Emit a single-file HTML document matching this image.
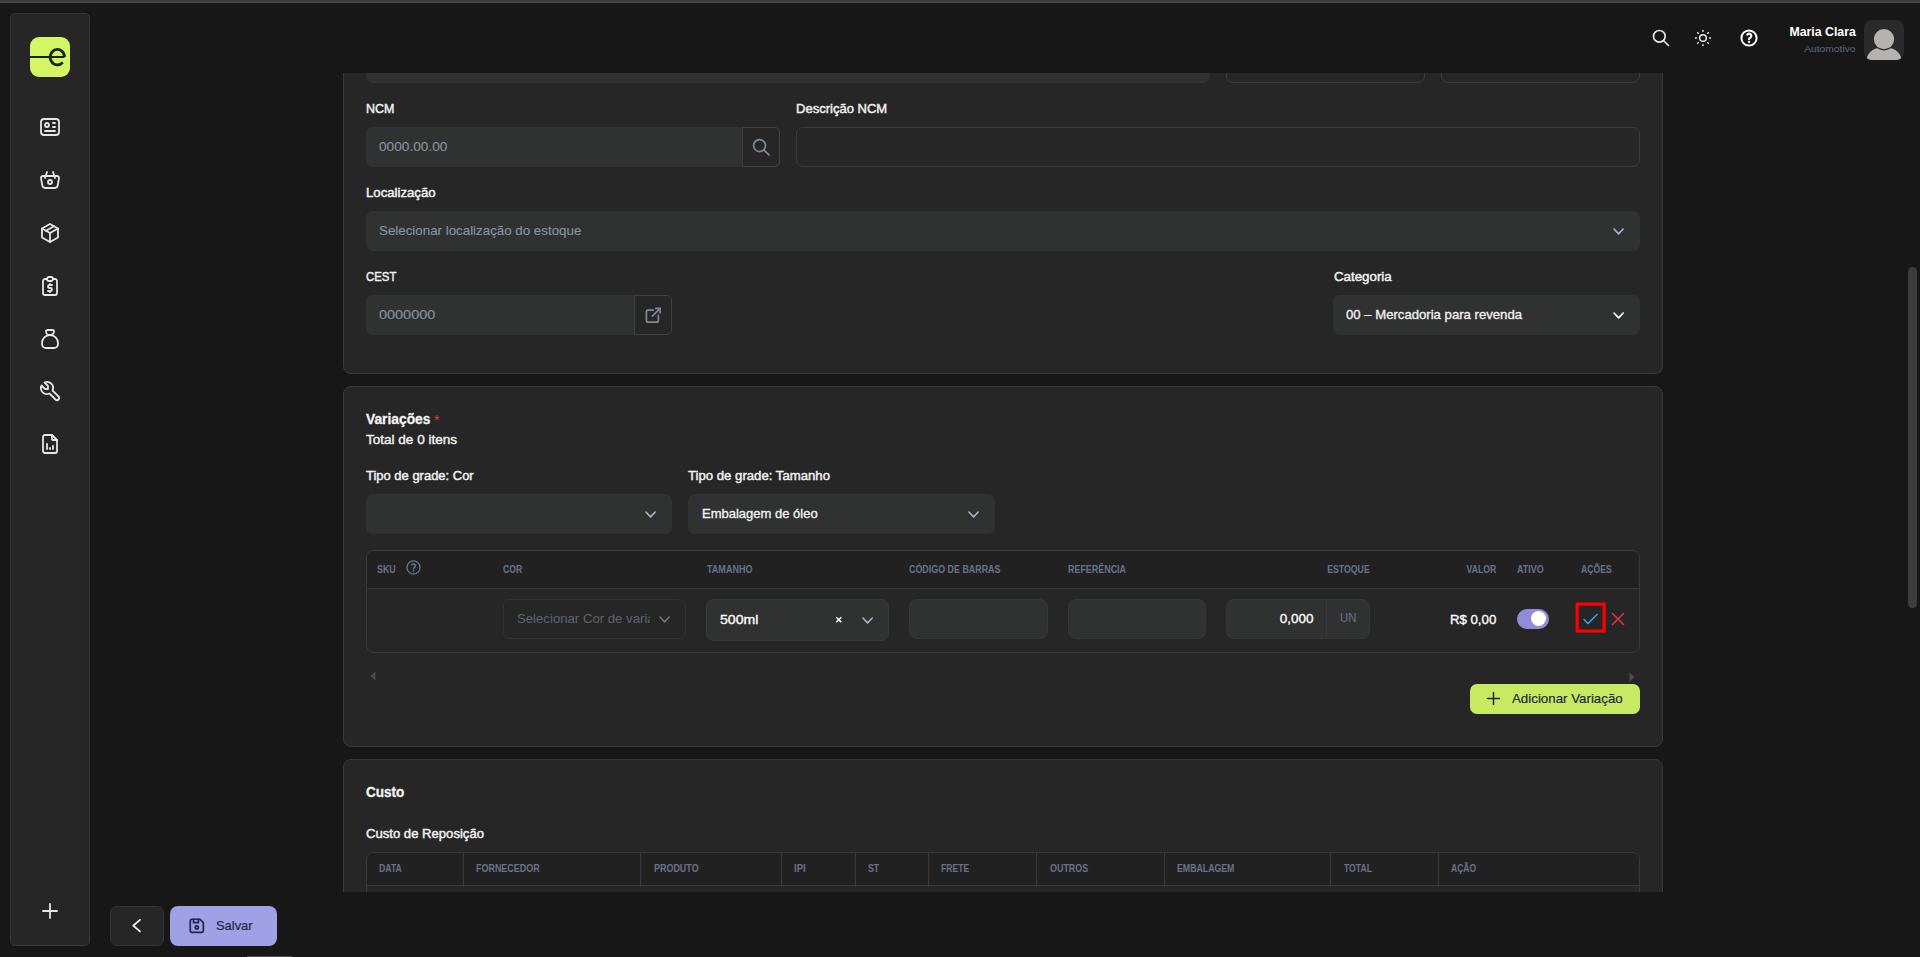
<!DOCTYPE html>
<html><head><meta charset="utf-8"><title>Produto</title>
<style>
*{box-sizing:border-box;margin:0;padding:0}
html,body{width:1920px;height:957px;overflow:hidden;background:#171717;font-family:"Liberation Sans",sans-serif;color:#f0f0f0}
.a{position:absolute}
.t{white-space:nowrap}
.topbar{left:0;top:0;width:1920px;height:3px;background:#3d3d3d;border-bottom:1px solid #494a49}
.side{left:10px;top:13px;width:80px;height:933px;background:#262626;border:1px solid #363636;border-radius:5px}
.logo{left:30px;top:37px;width:40px;height:40px;background:#d3f764;border-radius:9px}
.card{left:343px;width:1320px;background:#262626;border:1px solid #393939;border-radius:8px}
.inp{background:#303232;border-radius:7px}
.inpo{background:transparent;border:1px solid #3b3b3b;border-radius:7px}
svg{position:absolute;overflow:visible;fill:none;stroke-linecap:round;stroke-linejoin:round}
.si{left:38px;width:24px;height:24px;stroke:#e6e6e6;stroke-width:1.8}
.chev{width:12px;height:7px;stroke-width:1.5}
</style></head><body>
<div class="a topbar"></div>
<div class="a side"></div>
<div class="a logo"></div>
<svg class="a" style="left:30px;top:37px;width:40px;height:40px" viewBox="0 0 40 40"><path d="M0 20.100H34.500" stroke="#1b2317" stroke-width="2" stroke-linecap="butt"/><path d="M34.500 20.100A7.150 7.750 0 1 0 32.700 25.300" stroke="#1b2317" stroke-width="2.800" stroke-linecap="butt"/></svg>
<svg class="si" style="top:115px" viewBox="0 0 24 24"><path d="M3 7a3 3 0 0 1 3 -3h12a3 3 0 0 1 3 3v10a3 3 0 0 1 -3 3h-12a3 3 0 0 1 -3 -3z"/><path d="M7 10a2 2 0 1 0 4 0a2 2 0 1 0 -4 0"/><path d="M15 8h2"/><path d="M15 12h2"/><path d="M7 16h10"/></svg>
<svg class="si" style="top:168px" viewBox="0 0 24 24"><path d="M10 14a2 2 0 1 0 4 0a2 2 0 0 0 -4 0"/><path d="M5.001 8h13.999a2 2 0 0 1 1.977 2.304l-1.255 7.152a3 3 0 0 1 -2.966 2.544h-9.512a3 3 0 0 1 -2.965 -2.544l-1.255 -7.152a2 2 0 0 1 1.977 -2.304z"/><path d="M17 10l-2 -6"/><path d="M7 10l2 -6"/></svg>
<svg class="si" style="top:221px" viewBox="0 0 24 24"><path d="M12 3l8 4.500v9l-8 4.500l-8 -4.500v-9l8 -4.500"/><path d="M12 12l8 -4.500"/><path d="M12 12v9"/><path d="M12 12l-8 -4.500"/><path d="M16 5.250l-8 4.500"/></svg>
<svg class="si" style="top:274px" viewBox="0 0 24 24"><path d="M9 5h-2a2 2 0 0 0 -2 2v12a2 2 0 0 0 2 2h10a2 2 0 0 0 2 -2v-12a2 2 0 0 0 -2 -2h-2"/><path d="M9 5a2 2 0 0 1 2 -2h2a2 2 0 0 1 2 2a2 2 0 0 1 -2 2h-2a2 2 0 0 1 -2 -2z"/><path d="M14 11h-2.500a1.500 1.500 0 0 0 0 3h1a1.500 1.500 0 0 1 0 3h-2.500"/><path d="M12 17v1m0 -8v1"/></svg>
<svg class="si" style="top:327px" viewBox="0 0 24 24"><path d="M9.500 3h5a1.500 1.500 0 0 1 1.500 1.500a3.500 3.500 0 0 1 -3.500 3.500h-1a3.500 3.500 0 0 1 -3.500 -3.500a1.500 1.500 0 0 1 1.500 -1.500z"/><path d="M4 17v-1a8 8 0 1 1 16 0v1a4 4 0 0 1 -4 4h-8a4 4 0 0 1 -4 -4z"/></svg>
<svg class="si" style="top:379px" viewBox="0 0 24 24"><path d="M7 10h3v-3l-3.500 -3.500a6 6 0 0 1 8 8l6 6a2 2 0 0 1 -3 3l-6 -6a6 6 0 0 1 -8 -8l3.500 3.500"/></svg>
<svg class="si" style="top:432px" viewBox="0 0 24 24"><path d="M14 3v4a1 1 0 0 0 1 1h4"/><path d="M17 21h-10a2 2 0 0 1 -2 -2v-14a2 2 0 0 1 2 -2h7l5 5v11a2 2 0 0 1 -2 2z"/><path d="M9 17v-5"/><path d="M12 17v-1"/><path d="M15 17v-3"/></svg>
<svg class="si" style="top:899px" viewBox="0 0 24 24"><path d="M12 5v14"/><path d="M5 12h14"/></svg>
<svg style="left:1651.200px;top:28.200px;width:20px;height:20px;stroke:#e8e8e8;stroke-width:2" viewBox="0 0 24 24"><path d="M3 10a7 7 0 1 0 14 0a7 7 0 1 0 -14 0"/><path d="M21 21l-6 -6"/></svg>
<svg style="left:1693px;top:27.700px;width:20px;height:20px;stroke:#e8e8e8;stroke-width:1.800" viewBox="0 0 24 24"><circle cx="12" cy="12" r="4"/><path d="M3 12h1m8 -9v1m8 8h1m-9 8v1m-6.400 -15.400l.7 .7m12.100 -.7l-.7 .7m0 11.400l.7 .7m-12.100 -.7l-.7 .7"/></svg>
<svg style="left:1737px;top:26px;width:24px;height:24px;stroke:#ffffff;stroke-width:2" viewBox="0 0 24 24"><circle cx="12" cy="12" r="7.600"/><path d="M12 15.900v.01" stroke-width="2.300"/><path d="M12 13.200a1.300 1.300 0 0 1 .9 -1.300a2.200 2.200 0 1 0 -2.600 -3.300" stroke-width="2.100"/></svg>
<div class="a" style="left:1864px;top:20px;width:40px;height:40px;background:#2a2a2a;border-radius:8px;overflow:hidden"><svg style="left:0;top:0;width:40px;height:40px" viewBox="0 0 40 40"><path d="M2.500 40C3.500 32 10 27.300 20 27.300S36.500 32 37.500 40Z" fill="#b5b3af" stroke="none"/><circle cx="20" cy="19.100" r="11.300" fill="#2a2a2a" stroke="none"/><circle cx="20" cy="19.100" r="10.200" fill="#b5b3af" stroke="none"/></svg></div>
<div class="a card" style="top:73px;height:301px;border-top:none;border-radius:0 0 8px 8px"></div>
<div class="a inp" style="left:366px;top:60px;width:844px;height:23px"></div>
<div class="a inpo" style="left:1226px;top:60px;width:199px;height:23px"></div>
<div class="a inpo" style="left:1441px;top:60px;width:199px;height:23px"></div>
<div class="a" style="left:343px;top:60px;width:1320px;height:13px;background:#171717"></div>
<div class="a inp" style="left:366px;top:127px;width:377px;height:40px;border-radius:7px 0 0 7px"></div>
<div class="a" style="left:742px;top:127px;width:38px;height:40px;border:1px solid #3f4041;border-radius:0 5px 5px 0;background:#262626"></div>
<svg style="left:750.900px;top:136.760px;width:20.500px;height:20.500px;stroke:#7d8b98;stroke-width:2" viewBox="0 0 24 24"><path d="M3 10a7 7 0 1 0 14 0a7 7 0 1 0 -14 0"/><path d="M21 21l-6 -6"/></svg>
<div class="a inpo" style="left:796px;top:127px;width:844px;height:40px"></div>
<div class="a inp" style="left:366px;top:211px;width:1274px;height:40px"></div>
<svg style="left:1614.30px;top:228.60px;width:9.2px;height:4.9px;stroke:#a6b2c4;stroke-width:1.6" viewBox="0 0 9.2 4.9"><path d="M0 0L4.6 4.9L9.2 0"/></svg>
<div class="a inp" style="left:366px;top:295px;width:269px;height:40px;border-radius:7px 0 0 7px"></div>
<div class="a" style="left:634px;top:295px;width:38px;height:40px;border:1px solid #3f4041;border-radius:0 5px 5px 0;background:#262626"></div>
<svg style="left:642.900px;top:304.600px;width:20.500px;height:20.500px;stroke:#7d8b98;stroke-width:2" viewBox="0 0 24 24"><path d="M12 6h-6a2 2 0 0 0 -2 2v10a2 2 0 0 0 2 2h10a2 2 0 0 0 2 -2v-6"/><path d="M11 13l9 -9"/><path d="M15 4h5v5"/></svg>
<div class="a inp" style="left:1333px;top:295px;width:307px;height:40px"></div>
<svg style="left:1614.30px;top:312.60px;width:9.2px;height:4.9px;stroke:#ffffff;stroke-width:1.6" viewBox="0 0 9.2 4.9"><path d="M0 0L4.6 4.9L9.2 0"/></svg>
<div class="a card" style="top:386px;height:361px"></div>
<div class="a inp" style="left:366px;top:494px;width:306px;height:40px"></div>
<svg style="left:646.30px;top:511.60px;width:9.2px;height:4.9px;stroke:#a6b2c4;stroke-width:1.6" viewBox="0 0 9.2 4.9"><path d="M0 0L4.6 4.9L9.2 0"/></svg>
<div class="a inp" style="left:688px;top:494px;width:307px;height:40px"></div>
<svg style="left:969.30px;top:511.60px;width:9.2px;height:4.9px;stroke:#a6b2c4;stroke-width:1.6" viewBox="0 0 9.2 4.9"><path d="M0 0L4.6 4.9L9.2 0"/></svg>
<div class="a" style="left:366px;top:550px;width:1274px;height:103px;border:1px solid #393939;border-radius:8px;background:#262626;overflow:hidden"><div class="a" style="left:0;top:0;width:1272px;height:38px;background:#212121;border-bottom:1px solid #393939"></div></div>
<svg style="left:406px;top:560.400px;width:15px;height:15px;stroke:#6b7793;stroke-width:1.300" viewBox="0 0 15 15"><circle cx="7.500" cy="7.500" r="6.550"/><path d="M7.500 10.800v.01" stroke-width="1.700"/><path d="M7.500 8.700a1.100 1.100 0 0 1 .7 -1.100a1.850 1.850 0 1 0 -2.200 -2.700" stroke-width="1.500"/></svg>
<div class="a" style="left:503px;top:599px;width:183px;height:40px;border:1px solid #313131;border-radius:7px"></div>
<svg style="left:660.35px;top:616.55px;width:9.2px;height:4.9px;stroke:#6f747c;stroke-width:1.6" viewBox="0 0 9.2 4.9"><path d="M0 0L4.6 4.9L9.2 0"/></svg>
<div class="a inp" style="left:706px;top:599px;width:183px;height:42px;border:1px solid #383a3a;border-radius:8px"></div>
<svg style="left:836.300px;top:616.900px;width:5.600px;height:5.600px;stroke:#ffffff;stroke-width:1.500;stroke-linecap:butt" viewBox="0 0 5.600 5.600"><path d="M0.300 0.300L5.300 5.300M5.300 0.300L0.300 5.300"/></svg>
<svg style="left:863.40px;top:617.55px;width:9.2px;height:4.9px;stroke:#a6b2c4;stroke-width:1.6" viewBox="0 0 9.2 4.9"><path d="M0 0L4.6 4.9L9.2 0"/></svg>
<div class="a inp" style="left:909px;top:599px;width:139px;height:40px;border:1px solid #363838;border-radius:8px"></div>
<div class="a inp" style="left:1068px;top:599px;width:138px;height:40px;border:1px solid #363838;border-radius:8px"></div>
<div class="a inp" style="left:1226px;top:599px;width:144px;height:40px;border:1px solid #363838;border-radius:8px"></div>
<div class="a" style="left:1326px;top:600px;width:1px;height:38px;background:#383a3a"></div>
<div class="a" style="left:1517px;top:609px;width:32px;height:20px;border-radius:10px;background:#908cd9"></div>
<div class="a" style="left:1531.400px;top:611.400px;width:15px;height:15px;border-radius:8px;background:#ffffff"></div>
<svg style="left:1570px;top:597px;width:42px;height:42px;stroke:#fe0000;stroke-width:3.150;stroke-linejoin:miter;stroke-linecap:butt" viewBox="0 0 42 42"><rect x="7.175" y="7.125" width="26.950" height="26.950"/></svg>
<svg style="left:1583px;top:613px;width:15px;height:12px;stroke:#3d9cea;stroke-width:1.600" viewBox="0 0 15 12"><path d="M1 6.500L5 10.500L14 1.500"/></svg>
<svg style="left:1612.050px;top:612.950px;width:12px;height:12px;stroke:#d8383b;stroke-width:1.600" viewBox="0 0 12 12"><path d="M0.500 0.500L11.500 11.500M11.500 0.500L0.500 11.500"/></svg>
<svg style="left:370px;top:671px;width:6px;height:10px" viewBox="0 0 6 10"><path d="M5.500 0.500V9.500L0.500 5Z" fill="#4b4b4b" stroke="none"/></svg>
<svg style="left:1629px;top:672px;width:6px;height:10px" viewBox="0 0 6 10"><path d="M0.500 0.500V9.500L5.500 5Z" fill="#4b4b4b" stroke="none"/></svg>
<div class="a" style="left:1470px;top:684px;width:170px;height:30px;border-radius:7px;background:#c8ea62"></div>
<svg style="left:1486.500px;top:692px;width:13px;height:13px;stroke:#1e2942;stroke-width:1.5" viewBox="0 0 13 13"><path d="M6.500 0.500V12.500M0.500 6.500H12.500"/></svg>
<div class="a card" style="top:759px;height:160px"></div>
<div class="a" style="left:366px;top:852px;width:1274px;height:80px;border:1px solid #393939;border-radius:8px;background:#262626;overflow:hidden"><div class="a" style="left:0;top:0;width:1272px;height:33px;background:#212121;border-bottom:1px solid #393939"></div><div class="a" style="left:96px;top:0;width:1px;height:34px;background:#393939"></div><div class="a" style="left:273px;top:0;width:1px;height:34px;background:#393939"></div><div class="a" style="left:414px;top:0;width:1px;height:34px;background:#393939"></div><div class="a" style="left:488px;top:0;width:1px;height:34px;background:#393939"></div><div class="a" style="left:561px;top:0;width:1px;height:34px;background:#393939"></div><div class="a" style="left:669px;top:0;width:1px;height:34px;background:#393939"></div><div class="a" style="left:797px;top:0;width:1px;height:34px;background:#393939"></div><div class="a" style="left:963px;top:0;width:1px;height:34px;background:#393939"></div><div class="a" style="left:1071px;top:0;width:1px;height:34px;background:#393939"></div></div>
<div class="a" style="left:330px;top:892px;width:1350px;height:65px;background:#171717"></div>
<div class="a" style="left:110px;top:906px;width:54px;height:40px;border-radius:7px;background:#262626;border:1px solid #333333"></div>
<svg style="left:0;top:0;width:300px;height:957px;stroke:#ffffff;stroke-width:1.700" viewBox="0 0 300 957"><path d="M140 919.800L133.200 925.600L140 931.400"/></svg>
<div class="a" style="left:170px;top:906px;width:107px;height:40px;border-radius:8px;background:#a0a0e6"></div>
<svg style="left:187.100px;top:916.200px;width:19.600px;height:19.600px;stroke:#1e2746;stroke-width:2.100" viewBox="0 0 24 24"><path d="M6 4h10l4 4v10a2 2 0 0 1 -2 2h-12a2 2 0 0 1 -2 -2v-12a2 2 0 0 1 2 -2"/><path d="M10 14a2 2 0 1 0 4 0a2 2 0 1 0 -4 0"/><path d="M14 4v4h-6v-4"/></svg>
<div class="a" style="left:1908px;top:267px;width:9px;height:341px;border-radius:5px;background:#3c3c3c"></div>
<div class="a" style="left:247px;top:956px;width:45px;height:1px;background:#505050"></div>
<span class="a t" style="left:1783.20px;transform-origin:100% 0;top:22.00px;font-size:13.5px;line-height:19px;font-weight:bold;color:#ffffff;transform:scaleX(0.9108)">Maria Clara</span>
<span class="a t" style="left:1808.47px;transform-origin:100% 0;top:42.00px;font-size:9.5px;line-height:13px;font-weight:normal;color:#5d6885;transform:scaleX(1.0793)">Automotivo</span>
<span class="a t" style="left:366.00px;transform-origin:0 0;top:99.50px;font-size:13px;line-height:18px;font-weight:normal;color:#f1f1f1;-webkit-text-stroke:0.45px #f1f1f1;transform:scaleX(0.9592)">NCM</span>
<span class="a t" style="left:796.00px;transform-origin:0 0;top:99.50px;font-size:13px;line-height:18px;font-weight:normal;color:#f1f1f1;-webkit-text-stroke:0.45px #f1f1f1;transform:scaleX(1.0020)">Descrição NCM</span>
<span class="a t" style="left:378.70px;transform-origin:0 0;top:137.50px;font-size:13px;line-height:18px;font-weight:normal;color:#8994a2;-webkit-text-stroke:0.1px #8994a2;transform:scaleX(1.0510)">0000.00.00</span>
<span class="a t" style="left:366.00px;transform-origin:0 0;top:183.50px;font-size:13px;line-height:18px;font-weight:normal;color:#f1f1f1;-webkit-text-stroke:0.45px #f1f1f1;transform:scaleX(1.0137)">Localização</span>
<span class="a t" style="left:378.70px;transform-origin:0 0;top:221.50px;font-size:13px;line-height:18px;font-weight:normal;color:#8994a2;-webkit-text-stroke:0.1px #8994a2;transform:scaleX(1.0253)">Selecionar localização do estoque</span>
<span class="a t" style="left:366.00px;transform-origin:0 0;top:267.50px;font-size:13px;line-height:18px;font-weight:normal;color:#f1f1f1;-webkit-text-stroke:0.45px #f1f1f1;transform:scaleX(0.8768)">CEST</span>
<span class="a t" style="left:378.70px;transform-origin:0 0;top:305.50px;font-size:13px;line-height:18px;font-weight:normal;color:#8994a2;-webkit-text-stroke:0.1px #8994a2;transform:scaleX(1.1121)">0000000</span>
<span class="a t" style="left:1333.50px;transform-origin:0 0;top:267.50px;font-size:13px;line-height:18px;font-weight:normal;color:#f1f1f1;-webkit-text-stroke:0.45px #f1f1f1;transform:scaleX(1.0235)">Categoria</span>
<span class="a t" style="left:1346.20px;transform-origin:0 0;top:305.50px;font-size:13px;line-height:18px;font-weight:normal;color:#f3f3f3;-webkit-text-stroke:0.32px #f3f3f3;transform:scaleX(1.0105)">00 – Mercadoria para revenda</span>
<span class="a t" style="left:365.60px;transform-origin:0 0;top:409.00px;font-size:14px;line-height:20px;font-weight:bold;color:#f4f4f4;-webkit-text-stroke:0.3px #f4f4f4;transform:scaleX(0.9849)">Variações</span>
<span class="a t" style="left:433.70px;transform-origin:0 0;top:408.60px;font-size:15px;line-height:21px;font-weight:normal;color:#e23b3b;transform:scaleX(0.9241)">*</span>
<span class="a t" style="left:366.00px;transform-origin:0 0;top:430.50px;font-size:13px;line-height:18px;font-weight:normal;color:#f1f1f1;-webkit-text-stroke:0.4px #f1f1f1;transform:scaleX(1.0406)">Total de 0 itens</span>
<span class="a t" style="left:366.00px;transform-origin:0 0;top:466.50px;font-size:13px;line-height:18px;font-weight:normal;color:#f1f1f1;-webkit-text-stroke:0.45px #f1f1f1;transform:scaleX(0.9979)">Tipo de grade: Cor</span>
<span class="a t" style="left:688.40px;transform-origin:0 0;top:466.50px;font-size:13px;line-height:18px;font-weight:normal;color:#f1f1f1;-webkit-text-stroke:0.45px #f1f1f1;transform:scaleX(1.0127)">Tipo de grade: Tamanho</span>
<span class="a t" style="left:701.50px;transform-origin:0 0;top:504.50px;font-size:13px;line-height:18px;font-weight:normal;color:#f3f3f3;-webkit-text-stroke:0.32px #f3f3f3;transform:scaleX(1.0005)">Embalagem de óleo</span>
<span class="a t" style="left:376.50px;transform-origin:0 0;top:562.50px;font-size:10px;line-height:14px;font-weight:bold;color:#68738a;transform:scaleX(0.8852)">SKU</span>
<span class="a t" style="left:503.40px;transform-origin:0 0;top:562.50px;font-size:10px;line-height:14px;font-weight:bold;color:#68738a;transform:scaleX(0.8680)">COR</span>
<span class="a t" style="left:706.90px;transform-origin:0 0;top:562.50px;font-size:10px;line-height:14px;font-weight:bold;color:#68738a;transform:scaleX(0.9032)">TAMANHO</span>
<span class="a t" style="left:909.40px;transform-origin:0 0;top:562.50px;font-size:10px;line-height:14px;font-weight:bold;color:#68738a;transform:scaleX(0.8901)">CÓDIGO DE BARRAS</span>
<span class="a t" style="left:1068.00px;transform-origin:0 0;top:562.50px;font-size:10px;line-height:14px;font-weight:bold;color:#68738a;transform:scaleX(0.8921)">REFERÊNCIA</span>
<span class="a t" style="left:1321.28px;transform-origin:100% 0;top:562.50px;font-size:10px;line-height:14px;font-weight:bold;color:#68738a;transform:scaleX(0.8724)">ESTOQUE</span>
<span class="a t" style="left:1462.33px;transform-origin:100% 0;top:562.50px;font-size:10px;line-height:14px;font-weight:bold;color:#68738a;transform:scaleX(0.8668)">VALOR</span>
<span class="a t" style="left:1517.00px;transform-origin:0 0;top:562.50px;font-size:10px;line-height:14px;font-weight:bold;color:#68738a;transform:scaleX(0.8918)">ATIVO</span>
<span class="a t" style="left:1580.50px;transform-origin:0 0;top:562.50px;font-size:10px;line-height:14px;font-weight:bold;color:#68738a;transform:scaleX(0.8661)">AÇÕES</span>
<span class="a t" style="left:516.60px;transform-origin:0 0;top:609.50px;font-size:13px;line-height:18px;font-weight:normal;color:#5e636b;width:130.76px;overflow:hidden;transform:scaleX(1.0133)">Selecionar Cor de variação</span>
<span class="a t" style="left:719.80px;transform-origin:0 0;top:610.20px;font-size:13.5px;line-height:19px;font-weight:normal;color:#ffffff;-webkit-text-stroke:0.32px #ffffff;transform:scaleX(1.0440)">500ml</span>
<span class="a t" style="left:1281.45px;transform-origin:100% 0;top:609.50px;font-size:13px;line-height:18px;font-weight:normal;color:#ffffff;-webkit-text-stroke:0.32px #ffffff;transform:scaleX(1.0354)">0,000</span>
<span class="a t" style="left:1340.30px;transform-origin:0 0;top:608.50px;font-size:13px;line-height:18px;font-weight:normal;color:#6b7486;transform:scaleX(0.8679)">UN</span>
<span class="a t" style="left:1449.40px;transform-origin:100% 0;top:610.40px;font-size:13.5px;line-height:19px;font-weight:normal;color:#ffffff;-webkit-text-stroke:0.32px #ffffff;transform:scaleX(0.9810)">R$ 0,00</span>
<span class="a t" style="left:1511.50px;transform-origin:0 0;top:689.50px;font-size:13px;line-height:18px;font-weight:normal;color:#1e2942;-webkit-text-stroke:0.2px #1e2942;transform:scaleX(1.0235)">Adicionar Variação</span>
<span class="a t" style="left:366.00px;transform-origin:0 0;top:782.20px;font-size:14px;line-height:20px;font-weight:bold;color:#f4f4f4;-webkit-text-stroke:0.3px #f4f4f4;transform:scaleX(0.9679)">Custo</span>
<span class="a t" style="left:366.00px;transform-origin:0 0;top:824.90px;font-size:13px;line-height:18px;font-weight:normal;color:#f1f1f1;-webkit-text-stroke:0.45px #f1f1f1;transform:scaleX(1.0079)">Custo de Reposição</span>
<span class="a t" style="left:378.80px;transform-origin:0 0;top:861.50px;font-size:10px;line-height:14px;font-weight:bold;color:#68738a;transform:scaleX(0.8708)">DATA</span>
<span class="a t" style="left:475.70px;transform-origin:0 0;top:861.50px;font-size:10px;line-height:14px;font-weight:bold;color:#68738a;transform:scaleX(0.8956)">FORNECEDOR</span>
<span class="a t" style="left:653.80px;transform-origin:0 0;top:861.50px;font-size:10px;line-height:14px;font-weight:bold;color:#68738a;transform:scaleX(0.8951)">PRODUTO</span>
<span class="a t" style="left:793.70px;transform-origin:0 0;top:861.50px;font-size:10px;line-height:14px;font-weight:bold;color:#68738a;transform:scaleX(0.9563)">IPI</span>
<span class="a t" style="left:867.50px;transform-origin:0 0;top:861.50px;font-size:10px;line-height:14px;font-weight:bold;color:#68738a;transform:scaleX(0.8763)">ST</span>
<span class="a t" style="left:941.20px;transform-origin:0 0;top:861.50px;font-size:10px;line-height:14px;font-weight:bold;color:#68738a;transform:scaleX(0.8602)">FRETE</span>
<span class="a t" style="left:1049.50px;transform-origin:0 0;top:861.50px;font-size:10px;line-height:14px;font-weight:bold;color:#68738a;transform:scaleX(0.8929)">OUTROS</span>
<span class="a t" style="left:1177.10px;transform-origin:0 0;top:861.50px;font-size:10px;line-height:14px;font-weight:bold;color:#68738a;transform:scaleX(0.8755)">EMBALAGEM</span>
<span class="a t" style="left:1343.70px;transform-origin:0 0;top:861.50px;font-size:10px;line-height:14px;font-weight:bold;color:#68738a;transform:scaleX(0.8609)">TOTAL</span>
<span class="a t" style="left:1450.70px;transform-origin:0 0;top:861.50px;font-size:10px;line-height:14px;font-weight:bold;color:#68738a;transform:scaleX(0.8556)">AÇÃO</span>
<span class="a t" style="left:215.60px;transform-origin:0 0;top:916.80px;font-size:13px;line-height:18px;font-weight:normal;color:#1e2746;-webkit-text-stroke:0.2px #1e2746;transform:scaleX(0.9930)">Salvar</span>
</body></html>
